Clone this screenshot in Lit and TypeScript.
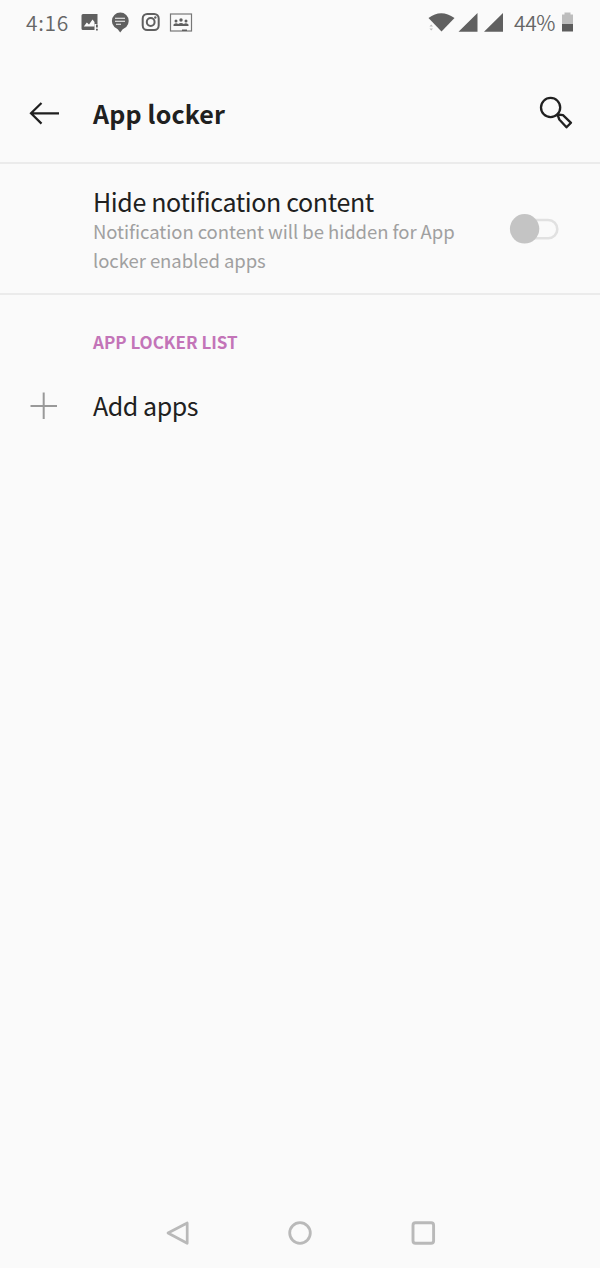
import { LitElement, html, css } from "lit";
import { customElement, state } from "lit/decorators.js";

@customElement("status-bar")
class StatusBar extends LitElement {
  static styles = css`
    :host { display: flex; height: 46px; padding: 0 26px; box-sizing: border-box; align-items: center; justify-content: space-between; color: #666; font-size: 21px; line-height: 46px; font-weight: 350; }
    svg { display: block; }
    .side { display: flex; height: 46px; align-items: center; }
    .time, .battery { height: 48px; line-height: 46px; }
    .time { width: 54px; letter-spacing: 0.65px; }
    .battery { width: 47px; letter-spacing: -0.35px; }
  `;
  render() {
    return html`
      <div class="side">
        <span class="time">4:16</span>
        <svg width="114" height="46" viewBox="80 0 114 46" fill="#5f5f5f">
          <path d="M83 14H97.500V24H94.500V30H83Q81.500 30 81.500 28.500V15.500Q81.500 14 83 14ZM96 24.500H97.800V27.500H96ZM96 28.700H97.800V30.500H96Z"/>
          <path d="M83.800 26.500L86.800 22.500L89 24.500L92.500 19.500L94.500 22V26.500Z" fill="#fafafa"/>
          <circle cx="120.300" cy="21" r="8.400"/>
          <path d="M116 27H124.500L120.200 32.500Z"/>
          <path d="M115 18.300H125M115 21.300H125M116 24.300H121" stroke="#fafafa" stroke-width="1.100"/>
          <g fill="none" stroke="#5f5f5f" stroke-width="2">
            <rect x="142.700" y="14" width="16" height="16" rx="4.500"/>
            <circle cx="150.700" cy="22" r="3.900"/>
          </g>
          <circle cx="155.300" cy="17.500" r="1.200"/>
          <rect x="170.500" y="14" width="21" height="17" fill="none" stroke="#777" stroke-width="1.200"/>
          <circle cx="176" cy="21" r="1.500"/><circle cx="181" cy="20" r="1.700"/><circle cx="186" cy="21" r="1.500"/>
          <path d="M173.500 26V24.500Q176 22.500 178.200 24Q181 21.800 183.800 24Q186 22.500 188.500 24.500V26ZM182 29.500H187V31H182Z"/>
        </svg>
      </div>
      <div class="side">
        <svg width="86" height="46" viewBox="428 0 86 46" fill="#606060">
          <path d="M428.500 18Q441 8.500 454.500 18L441.500 31.500Z"/>
          <path d="M458.500 31.800L477.500 13V31.800ZM484 31.800L503 13V31.800Z"/>
          <path d="M429.500 26.500H433L431.200 24.500ZM429.500 28.500H433L431.200 30.500Z" fill="#bbb"/>
        </svg>
        <span class="battery">44%</span>
        <svg width="13" height="46" viewBox="561 0 13 46">
          <path d="M562 24V14.500H564.500V12.500H570.500V14.500H573V24Z" fill="#bdbdbd"/>
          <path d="M562 24H573V31.500H562Z" fill="#5c5c5c"/>
        </svg>
      </div>`;
  }
}

@customElement("toggle-switch")
class ToggleSwitch extends LitElement {
  static styles = css`:host, svg { display: block; }`;
  render() {
    return html`<svg width="50" height="32" viewBox="509 213 50 32">
      <rect x="516" y="220" width="41.300" height="18.300" rx="9.150" fill="none" stroke="#e1e1e1" stroke-width="2.600"/>
      <circle cx="524.600" cy="228.800" r="14.700" fill="#c4c4c4"/>
    </svg>`;
  }
}

@customElement("app-root")
class AppRoot extends LitElement {
  @state() private items = ["Add apps"];

  static styles = css`
    :host { display: flex; flex-direction: column; height: 1268px; background: #fafafa; color: #202020; font-family: "Noto Sans CJK SC", "Noto Sans", sans-serif; overflow: hidden; }
    svg { display: block; }
    .header { display: flex; height: 118px; box-sizing: border-box; border-bottom: 2px solid #ebebeb; padding: 18px 27px 0 28px; align-items: center; }
    .title { flex: 1; margin: -1px 0 0 33px; font-size: 25px; line-height: 36px; font-weight: 700; letter-spacing: 0.17px; }
    .pref { display: flex; height: 131px; box-sizing: border-box; padding: 22px 41px 0 93px; border-bottom: 2px solid #ebebeb; justify-content: space-between; }
    .name { font-size: 25px; line-height: 31px; white-space: nowrap; font-weight: 400; letter-spacing: -0.36px; }
    .summary { font-size: 18.500px; line-height: 29.500px; white-space: nowrap; color: #a0a0a0; letter-spacing: -0.06px; margin-top: -0.500px; }
    .toggle { margin-top: 27px; }
    .section { margin: 0; padding: 33px 0 0 93px; font-size: 17px; line-height: 28px; font-weight: 700; color: #c374b8; }
    .row { display: flex; align-items: center; gap: 35px; padding: 34px 0 0 30px; }
    .row .name { letter-spacing: -0.45px; }
    .nav { display: flex; justify-content: space-between; margin-top: auto; padding: 0 164px 21px 165px; }
    .nav .home { margin-right: 1px; }
  `;

  render() {
    return html`
      <status-bar></status-bar>
      <header class="header">
        <svg width="32" height="30" viewBox="28 98 32 30" fill="none" stroke="#1f1f1f" stroke-width="2.200"><path d="M41.500 103L31 113.300L41.500 123.600M31 113.300H59"/></svg>
        <h1 class="title">App locker</h1>
        <svg width="34" height="34" viewBox="539 96 34 34" fill="none" stroke="#202020" stroke-width="2.300" stroke-linejoin="round"><circle cx="550.600" cy="107.500" r="9.600"/><path d="M557.500 114.500L559.300 119.500L566.500 127.300L571 122.800L563 115.200Z"/></svg>
      </header>
      <section class="pref">
        <div>
          <div class="name">Hide notification content</div>
          <div class="summary">Notification content will be hidden for App<br>locker enabled apps</div>
        </div>
        <toggle-switch class="toggle"></toggle-switch>
      </section>
      <h2 class="section">APP LOCKER LIST</h2>
      ${this.items.map((item) => html`<div class="row">
        <svg width="28" height="28" viewBox="30 392 28 28" fill="none" stroke="#999" stroke-width="2"><path d="M30.500 406H57M43.700 392.500V419"/></svg>
        <span class="name">${item}</span>
      </div>`)}
      <nav class="nav">
        <svg width="26" height="28" viewBox="165 1219 26 28" fill="none" stroke="#b9b9b9" stroke-width="2.700" stroke-linejoin="round"><path d="M168 1233L187.200 1223V1243.300Z"/></svg>
        <svg class="home" width="26" height="28" viewBox="287 1219 26 28" fill="none" stroke="#b9b9b9" stroke-width="2.800"><circle cx="300" cy="1233" r="10.300"/></svg>
        <svg width="26" height="28" viewBox="410 1219 26 28" fill="none" stroke="#b9b9b9" stroke-width="2.900"><rect x="413" y="1222.700" width="20.600" height="20.600" rx="2.500"/></svg>
      </nav>`;
  }
}
